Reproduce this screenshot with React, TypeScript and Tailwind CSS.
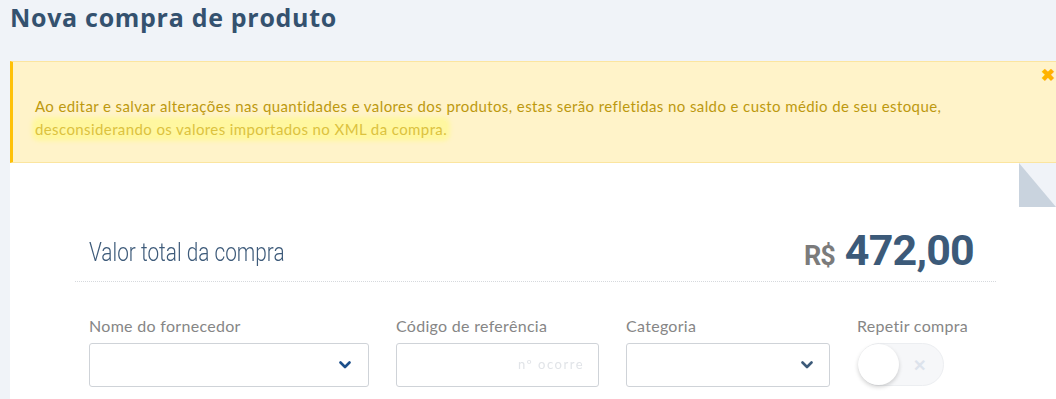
import React from "react";

function Chevron({ color }: { color: string }) {
  return (
    <svg width="12" height="8" viewBox="0 0 12 8" fill="none">
      <path d="M1.5 1.5 L6 6 L10.5 1.5" stroke={color} strokeWidth="2.6" strokeLinecap="round" strokeLinejoin="round" />
    </svg>
  );
}

export default function App() {
  return (
    <div className="w-[1056px] h-[399px] overflow-hidden bg-[#f0f3f8] font-['Lato',sans-serif]">
      <div className="h-[61px] pl-[10px] pt-[1px]">
        <h1 className="font-['Open_Sans',sans-serif] text-[25px] leading-[32px] font-bold tracking-[0.7px] text-[#34516f] whitespace-nowrap">
          Nova compra de produto
        </h1>
      </div>
      <div className="relative ml-[10px] h-[102px] bg-[#fff3c9] border-t border-b border-[#fbe5a0] border-l-[3px] border-l-[#ffc107] pl-[22px] pt-[33px] text-[15px] leading-[23px] tracking-[0.4px] text-[#bd990f]">
        <button className="absolute right-[1px] top-[4px] text-[#ffb300] text-[17px] font-bold leading-none">✖</button>
        <p>
          Ao editar e salvar alterações nas quantidades e valores dos produtos, estas serão refletidas no saldo e custo médio de seu estoque,
        </p>
        <p>
          <span className="bg-[#fff7a0] text-[#dcc23e] rounded-[4px] shadow-[0_0_4px_3px_#fff7a0]">
            desconsiderando os valores importados no XML da compra.
          </span>
        </p>
      </div>
      <div className="relative ml-[10px] bg-white h-[240px] pl-[65px] pt-[60px]">
        <div className="absolute right-0 top-0 w-[37px] h-[44px] bg-[#f0f3f8]">
          <div className="w-full h-full bg-[#c9d3de] [clip-path:polygon(0_0,100%_100%,0_100%)]" />
        </div>
        <div className="w-[921px]">
          <div className="h-[59px] flex items-end justify-between px-[14px] pb-[10px] border-b border-dotted border-[#d6d9dd]">
            <div className="font-['Roboto',sans-serif] text-[26px] leading-[30px] text-[#3e5b7a] pb-[4px] font-light origin-left scale-x-80 whitespace-nowrap">
              Valor total da compra
            </div>
            <div className="flex items-baseline gap-[10px] pr-[8px] -mb-[5px]">
              <span className="text-[27px] font-bold text-[#7b7b7b] font-['Roboto',sans-serif] tracking-[-1px]">R$</span>
              <span className="text-[43px] leading-[48px] font-bold text-[#3c5a79] font-['Roboto',sans-serif] tracking-[-0.8px]">472,00</span>
            </div>
          </div>
          <div className="flex pl-[14px] pt-[35px] text-[16px] tracking-[0.3px] text-[#868686]">
            <div className="w-[280px]">
              <div className="leading-[18px] mb-[8px]">Nome do fornecedor</div>
              <div className="h-[44px] border border-[#cfd3d8] rounded-[3px] flex items-center justify-end pr-[17px]">
                <Chevron color="#1d4f8b" />
              </div>
            </div>
            <div className="w-[203px] ml-[27px]">
              <div className="leading-[18px] mb-[8px]">Código de referência</div>
              <div className="h-[44px] border border-[#cfd3d8] rounded-[3px] flex items-center justify-end pr-[14px]">
                <span className="text-[13px] text-[#e1e4e8] tracking-[1.5px] blur-[0.6px]">nº ocorre</span>
              </div>
            </div>
            <div className="w-[204px] ml-[27px]">
              <div className="leading-[18px] mb-[8px]">Categoria</div>
              <div className="h-[44px] border border-[#cfd3d8] rounded-[3px] flex items-center justify-end pr-[16px]">
                <Chevron color="#3c5a79" />
              </div>
            </div>
            <div className="ml-[28px]">
              <div className="leading-[18px] mb-[8px] -ml-[1px]">Repetir compra</div>
              <div className="relative w-[86px] h-[43px] rounded-full bg-[#f6f7f9] border border-[#eceef1] flex items-center">
                <div className="absolute left-[-1px] top-[0px] w-[41px] h-[41px] rounded-full bg-white shadow-[0_2px_4px_rgba(0,0,0,0.18)]" />
                <span className="ml-[54px] text-[16px] font-bold text-[#dde3ec] leading-none">✕</span>
              </div>
            </div>
          </div>
        </div>
      </div>
    </div>
  );
}
